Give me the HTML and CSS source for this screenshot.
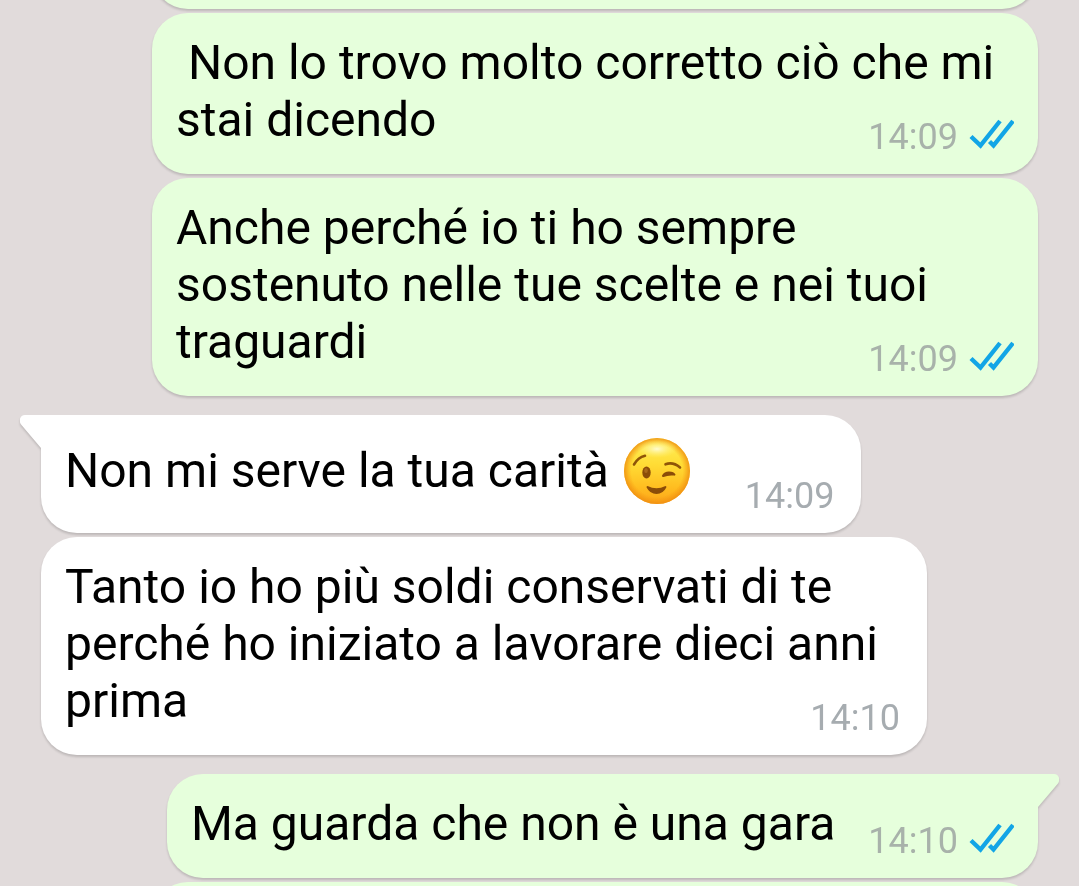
FILE: index.html
```
<!DOCTYPE html>
<html lang="it">
<head>
<meta charset="utf-8">
<meta name="viewport" content="width=device-width, initial-scale=1">
<title>Chat</title>
<link rel="stylesheet" href="styles.css">
</head>
<body>
<svg width="0" height="0" class="defs" aria-hidden="true">
  <symbol id="ticks" viewBox="0 0 46 32">
    <path d="M3 18.500 L12.500 27.500 L32 3 M21.500 23.500 L25.500 27.500 L45 3" fill="none" stroke="#12a5e6" stroke-width="4.400"/>
  </symbol>
</svg>
<main class="chat">
  <div class="bubble out wide previous"></div>

  <article class="bubble out">
    <span class="text"> Non lo trovo molto corretto ciò che mi stai dicendo</span>
    <div class="meta"><time>14:09</time><svg class="ticks" role="img" aria-label="Letto"><use href="#ticks"/></svg></div>
  </article>

  <article class="bubble out">
    <span class="text">Anche perché io ti ho sempre sostenuto nelle tue scelte e nei tuoi traguardi</span>
    <div class="meta"><time>14:09</time><svg class="ticks" role="img" aria-label="Letto"><use href="#ticks"/></svg></div>
  </article>

  <article class="bubble in single first">
    <svg class="tail" viewBox="0 0 22 34" aria-hidden="true"><path d="M22 0 H5 C0 0 -2 6 1.500 10 L21 33 H22 Z" fill="#fff"/></svg>
    <span class="text with-emoji">Non mi serve la tua carità
      <svg class="emoji" viewBox="0 0 66 66" role="img" aria-label="Faccina che fa l'occhiolino">
        <defs>
          <linearGradient id="face" x1="0" y1="0" x2="0" y2="1">
            <stop offset="0" stop-color="#fff05a"/>
            <stop offset=".4" stop-color="#ffdc35"/>
            <stop offset=".75" stop-color="#ffbd20"/>
            <stop offset="1" stop-color="#fda51a"/>
          </linearGradient>
          <radialGradient id="rim">
            <stop offset=".78" stop-color="#f59410" stop-opacity="0"/>
            <stop offset="1" stop-color="#ee8d10" stop-opacity=".85"/>
          </radialGradient>
          <radialGradient id="shine">
            <stop offset="0" stop-color="#fffde0" stop-opacity=".9"/>
            <stop offset="1" stop-color="#fff37a" stop-opacity="0"/>
          </radialGradient>
        </defs>
        <circle cx="33" cy="33" r="33" fill="url(#face)"/>
        <circle cx="33" cy="33" r="33" fill="url(#rim)"/>
        <ellipse cx="33" cy="11" rx="20" ry="9" fill="url(#shine)"/>
        <ellipse cx="22.500" cy="34.500" rx="4.200" ry="6" fill="#8b4c08"/>
        <ellipse cx="22" cy="32.500" rx="1.800" ry="2.500" fill="#a9681a"/>
        <path d="M10 26.500 Q14 19.500 21 17.800" fill="none" stroke="#8f5508" stroke-width="2.600" stroke-linecap="round"/>
        <path d="M41.500 26.300 Q49 23.500 56 29.500" fill="none" stroke="#8f5508" stroke-width="2.600" stroke-linecap="round"/>
        <path d="M38 37.500 Q40 33.500 45 33.500 Q50 33.500 51.500 36.500 Q51.500 37.800 50 37.600 Q44 37 39.500 39 Q37.800 39.200 38 37.500Z" fill="#8b4c08"/>
        <path d="M23.500 48 Q32.500 52.500 41.500 48 Q42.800 48 42.300 49.500 Q39 56 32.500 56 Q26 56 22.600 49.500 Q22.200 48 23.500 48Z" fill="#8b4c08"/>
      </svg>
    </span>
    <div class="meta"><time>14:09</time></div>
  </article>

  <article class="bubble in">
    <span class="text">Tanto io ho più soldi conservati di te perché ho iniziato a lavorare dieci anni prima</span>
    <div class="meta"><time>14:10</time></div>
  </article>

  <article class="bubble out single first">
    <svg class="tail" viewBox="0 0 22 34" aria-hidden="true"><path d="M0 0 H17 C22 0 24 6 20.500 10 L1 33 H0 Z" fill="#e6ffdc"/></svg>
    <span class="text">Ma guarda che non è una gara</span>
    <div class="meta"><time>14:10</time><svg class="ticks" role="img" aria-label="Letto"><use href="#ticks"/></svg></div>
  </article>

  <div class="bubble out wide"></div>
</main>
</body>
</html>
```
FILE: styles.css
```
* {
  box-sizing: border-box;
}

body {
  margin: 0;
  background: #e1dbdb;
  color: #000;
  font-family: Roboto, "Liberation Sans", sans-serif;
}

.defs {
  position: absolute;
}

.chat {
  display: flex;
  flex-direction: column;
  gap: 4px;
  height: 100vh;
  padding: 0 41px;
  overflow: hidden;
}

.bubble {
  display: flow-root;
  flex: none;
  position: relative;
  max-width: calc(100% - 111px);
  min-height: 104px;
  padding: 21px 24px 16px;
  border-radius: 36px;
  font-size: 48px;
  line-height: 57px;
  filter: drop-shadow(0 2px 1px rgba(0, 0, 0, 0.16));
}

.in {
  align-self: flex-start;
  padding-right: 27px;
  background: #fff;
}

.out {
  align-self: flex-end;
  background: #e6ffdc;
}

.wide {
  width: 100%;
}

.previous {
  margin-top: -95px;
}

.text {
  white-space: pre-wrap;
}

/* Sits beside the last line of the message, hanging just below it. */
.meta {
  display: flex;
  float: right;
  gap: 10px;
  margin-top: 25px;
  color: #a8b2aa;
  font-size: 36px;
  line-height: 42px;
}

.in .meta {
  color: #a6acb0;
}

.ticks {
  width: 46px;
  height: 32px;
  margin-top: 2px;
}

.single {
  display: flex;
  align-items: flex-end;
  gap: 33px;
}

.in.single {
  gap: 55px;
}

.single .text {
  margin-bottom: 10px;
}

.first {
  margin-top: 15px;
}

.in.first {
  border-top-left-radius: 0;
}

.out.first {
  border-top-right-radius: 0;
}

.tail {
  position: absolute;
  top: 0;
  width: 22px;
  height: 34px;
}

.in .tail {
  right: calc(100% - 1px);
}

.out .tail {
  left: calc(100% - 1px);
}

.single .with-emoji {
  display: flex;
  align-items: center;
  gap: 15px;
  margin-bottom: 12px;
  white-space: normal;
}

.emoji {
  flex: none;
  width: 66px;
  height: 66px;
  margin: 2px 0 1px;
}
```
